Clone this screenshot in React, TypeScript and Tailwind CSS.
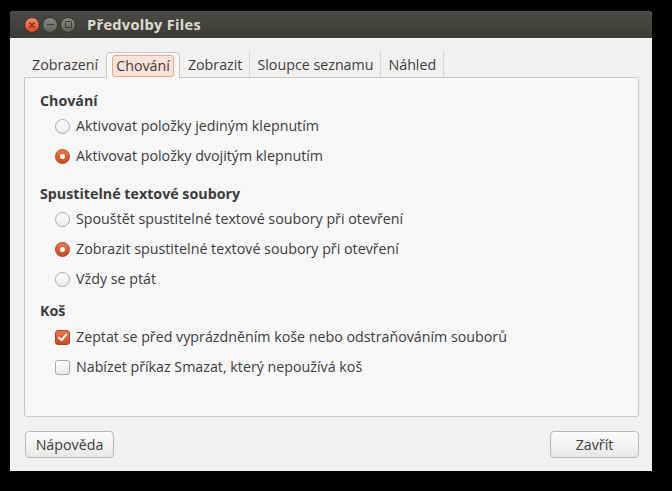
import React from "react";

const font = { fontFamily: '"Open Sans", "DejaVu Sans", sans-serif' };

function Radio({ checked, label }: { checked?: boolean; label: string }) {
  return (
    <div className="flex items-center h-[30px]">
      {checked ? (
        <span className="w-[15px] h-[15px] rounded-full bg-gradient-to-b from-[#f07a4a] to-[#c9481c] border border-[#b0441c] flex items-center justify-center">
          <span className="w-[5px] h-[5px] rounded-full bg-white" />
        </span>
      ) : (
        <span className="w-[15px] h-[15px] rounded-full bg-gradient-to-b from-white to-[#ebebeb] border border-[#a8a8a8]" />
      )}
      <span className="ml-[6px] text-[14.25px] text-[#3c3c3c]">{label}</span>
    </div>
  );
}

function Check({ checked, label }: { checked?: boolean; label: string }) {
  return (
    <div className="flex items-center h-[30px]">
      {checked ? (
        <span className="w-[15px] h-[15px] rounded-[3px] bg-gradient-to-b from-[#f07a4a] to-[#c9481c] border border-[#b0441c] flex items-center justify-center">
          <svg width="11" height="11" viewBox="0 0 11 11">
            <path d="M2 5.8 L4.5 8.3 L9.2 2.6" fill="none" stroke="white" strokeWidth="2" strokeLinecap="round" strokeLinejoin="round" />
          </svg>
        </span>
      ) : (
        <span className="w-[15px] h-[15px] rounded-[3px] bg-gradient-to-b from-white to-[#ebebeb] border border-[#a8a8a8]" />
      )}
      <span className="ml-[6px] text-[14.25px] text-[#3c3c3c]">{label}</span>
    </div>
  );
}

export default function App() {
  return (
    <div className="w-[672px] h-[491px] bg-black pt-[11px] pl-[10px]" style={font}>
      <div className="w-[642px] h-[460px] bg-[#f2f1f0] flex flex-col rounded-t-[4px] overflow-hidden">
        {/* title bar */}
        <div className="h-[27px] bg-gradient-to-b from-[#4b4a46] to-[#3c3b37] flex items-center pl-[14px] shrink-0">
          <div className="flex items-center gap-[2px]">
            <span className="w-[16px] h-[16px] rounded-full bg-gradient-to-b from-[#f68a5c] to-[#d9481a] border border-[#3a2a22] flex items-center justify-center">
              <svg width="8" height="8" viewBox="0 0 8 8">
                <path d="M2 2 L6 6 M6 2 L2 6" stroke="#5a2410" strokeWidth="1.3" strokeLinecap="round" />
              </svg>
            </span>
            <span className="w-[16px] h-[16px] rounded-full bg-gradient-to-b from-[#8a8984] to-[#605f5a] border border-[#33322f] flex items-center justify-center">
              <span className="w-[7px] h-[1.5px] bg-[#3c3b37]" />
            </span>
            <span className="w-[16px] h-[16px] rounded-full bg-gradient-to-b from-[#8a8984] to-[#605f5a] border border-[#33322f] flex items-center justify-center">
              <span className="w-[7px] h-[7px] border border-[#3c3b37] rounded-[1px]" />
            </span>
          </div>
          <span className="ml-[11px] text-[#dfdbd2] font-bold text-[14.6px] tracking-[0.3px]">Předvolby Files</span>
        </div>

        {/* body */}
        <div className="flex-1 flex flex-col pt-[13px] pl-[14px] pr-[13px] pb-[13px]">
          {/* tabs */}
          <div className="flex h-[26px] items-end text-[14.25px] text-[#3c3c3c]">
            <div className="h-[26px] flex items-center pl-[8px] pr-[8px] pt-[1px]">Zobrazení</div>
            <div className="h-[26px] relative top-[1px] flex items-center px-[5px] bg-[#f7f7f7] border border-b-0 border-[#c8c6c3] rounded-t-[4px] z-10">
              <span className="px-[3px] bg-[#fbe2d8] border border-[#e8a890] rounded-[3px] leading-[20px]">Chování</span>
            </div>
            <div className="h-[26px] flex items-center pl-[8px] pr-[7px] pt-[1px] border-r border-[#d8d6d3]">Zobrazit</div>
            <div className="h-[26px] flex items-center pl-[7px] pr-[7px] pt-[1px] border-r border-[#d8d6d3]">Sloupce seznamu</div>
            <div className="h-[26px] flex items-center pl-[7px] pr-[7px] pt-[1px] border-r border-[#d8d6d3]">Náhled</div>
          </div>
          {/* notebook */}
          <div className="h-[340px] bg-[#f7f7f7] border border-[#c8c6c3] rounded-b-[3px] rounded-tr-[3px] pl-[15px] pt-[13px]">
            <div className="font-bold text-[14.25px] text-[#3c3c3c] h-[20px] leading-[20px]">Chování</div>
            <div className="pl-[15px]">
              <Radio label="Aktivovat položky jediným klepnutím" />
              <Radio checked label="Aktivovat položky dvojitým klepnutím" />
            </div>
            <div className="font-bold text-[14.25px] text-[#3c3c3c] h-[20px] leading-[20px] mt-[13px]">Spustitelné textové soubory</div>
            <div className="pl-[15px]">
              <Radio label="Spouštět spustitelné textové soubory při otevření" />
              <Radio checked label="Zobrazit spustitelné textové soubory při otevření" />
              <Radio label="Vždy se ptát" />
            </div>
            <div className="font-bold text-[14.25px] text-[#3c3c3c] h-[20px] leading-[20px] mt-[7px]">Koš</div>
            <div className="pl-[15px] pt-[1px]">
              <Check checked label="Zeptat se před vyprázdněním koše nebo odstraňováním souborů" />
              <Check label="Nabízet příkaz Smazat, který nepoužívá koš" />
            </div>
          </div>
          {/* buttons */}
          <div className="flex justify-between mt-[14px] pl-[1px] pr-[0px]">
            <button className="w-[89px] h-[27px] rounded-[4px] border border-[#b8b6b2] bg-gradient-to-b from-[#fbfbfa] to-[#e9e8e6] text-[14.25px] text-[#3c3c3c] shadow-[inset_0_1px_0_white]">Nápověda</button>
            <button className="w-[89px] h-[27px] rounded-[4px] border border-[#b8b6b2] bg-gradient-to-b from-[#fbfbfa] to-[#e9e8e6] text-[14.25px] text-[#3c3c3c] shadow-[inset_0_1px_0_white]">Zavřít</button>
          </div>
        </div>
      </div>
    </div>
  );
}
